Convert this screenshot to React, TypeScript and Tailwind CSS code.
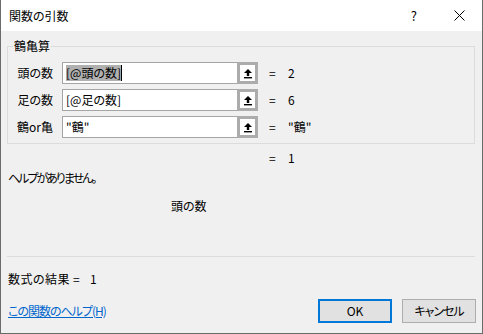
const FONT = "font-['Noto_Sans_CJK_JP','Noto_Sans',sans-serif] [font-feature-settings:'palt']";

function RefButton() {
  // the little "collapse dialog" picker at the right of each argument box
  return (
    <div className="w-[21px] h-[22px] border-[3px] border-[#acacac] bg-white flex items-center justify-center">
      <svg width="10" height="11" viewBox="0 0 10 11">
        <path d="M5 1 L9 5 L6.2 5 L6.2 8 L3.8 8 L3.8 5 L1 5 Z" fill="#000" />
        <rect x="1" y="9" width="8" height="1.4" fill="#000" />
      </svg>
    </div>
  );
}

interface ArgRowProps {
  label: string;
  value: string;
  result: string;
  selected?: boolean;
}

function ArgRow({ label, value, result, selected }: ArgRowProps) {
  return (
    <div className="flex items-center h-[22px]">
      <div className="w-[47px] pr-[2px] text-right whitespace-nowrap">{label}</div>
      <div className="ml-[7px] flex w-[196px] h-[22px] border border-[#a5a5a5] border-r-0 bg-white">
        <div className="flex-1 flex items-center pl-[3px]">
          {selected ? (
            <span className="bg-[#b0b0b0] border-r border-black leading-[16px]">{value}</span>
          ) : (
            <span className="leading-[16px]">{value}</span>
          )}
        </div>
        <div className="-mt-px -mb-px">
          <RefButton />
        </div>
      </div>
      <div className="ml-[11px] w-[19px]">=</div>
      <div>{result}</div>
    </div>
  );
}

export default function App() {
  return (
    <div className={`${FONT} w-[483px] h-[334px] flex flex-col border-x border-b border-[#6b6b6b] text-[12px] leading-[16px] text-black bg-[#f0f0f0]`}>
      <div className="h-[31px] shrink-0 bg-white flex items-center">
        <div className="pl-[8px] text-[12px]">関数の引数</div>
        <div className="ml-auto mr-[37px] text-[13px]">?</div>
        <svg width="11" height="11" viewBox="0 0 11 11" className="mr-[17px]">
          <path d="M0.5 0.5 L10.5 10.5 M10.5 0.5 L0.5 10.5" stroke="#000" strokeWidth="1" />
        </svg>
      </div>

      <div className="flex-1 flex flex-col pl-[6px] pt-[7px]">
        <fieldset className="w-[468px] border border-[#dcdcdc] pt-[8px] pb-[5px] flex flex-col gap-[5px]">
          <legend className="ml-[5px] px-[1px]">鶴亀算</legend>
          <ArgRow label="頭の数" value="[@頭の数]" result="2" selected />
          <ArgRow label="足の数" value="[@足の数]" result="6" />
          <ArgRow label="鶴or亀" value={'"鶴"'} result={'"鶴"'} />
        </fieldset>

        <div className="mt-[6px] flex pl-[262px]">
          <div className="w-[19px]">=</div>
          <div>1</div>
        </div>
        <div className="mt-[4px] pl-px tracking-[-2px]">ヘルプがありません。</div>
        <div className="mt-[12px] pl-[164px]">頭の数</div>

        <div className="mt-[42px] w-[468px] h-px bg-[#dcdcdc]" />

        <div className="mt-[14px] pl-px flex">
          <span className="w-[65px] shrink-0 whitespace-nowrap tracking-[0.5px]">数式の結果</span>
          <span className="w-[17px]">=</span>
          <span>1</span>
        </div>

        <div className="mt-[12px] flex items-center">
          <a className="pl-px text-[#0066cc] underline tracking-[-1px]">この関数のヘルプ(H)</a>
          <button className="ml-auto w-[74px] h-[24px] border-2 border-[#0078d7] bg-[#e1e1e1]">OK</button>
          <button className="ml-[10px] mr-[6px] w-[74px] h-[24px] border border-[#adadad] bg-[#e1e1e1] tracking-[-1px]">キャンセル</button>
        </div>
      </div>
    </div>
  );
}
